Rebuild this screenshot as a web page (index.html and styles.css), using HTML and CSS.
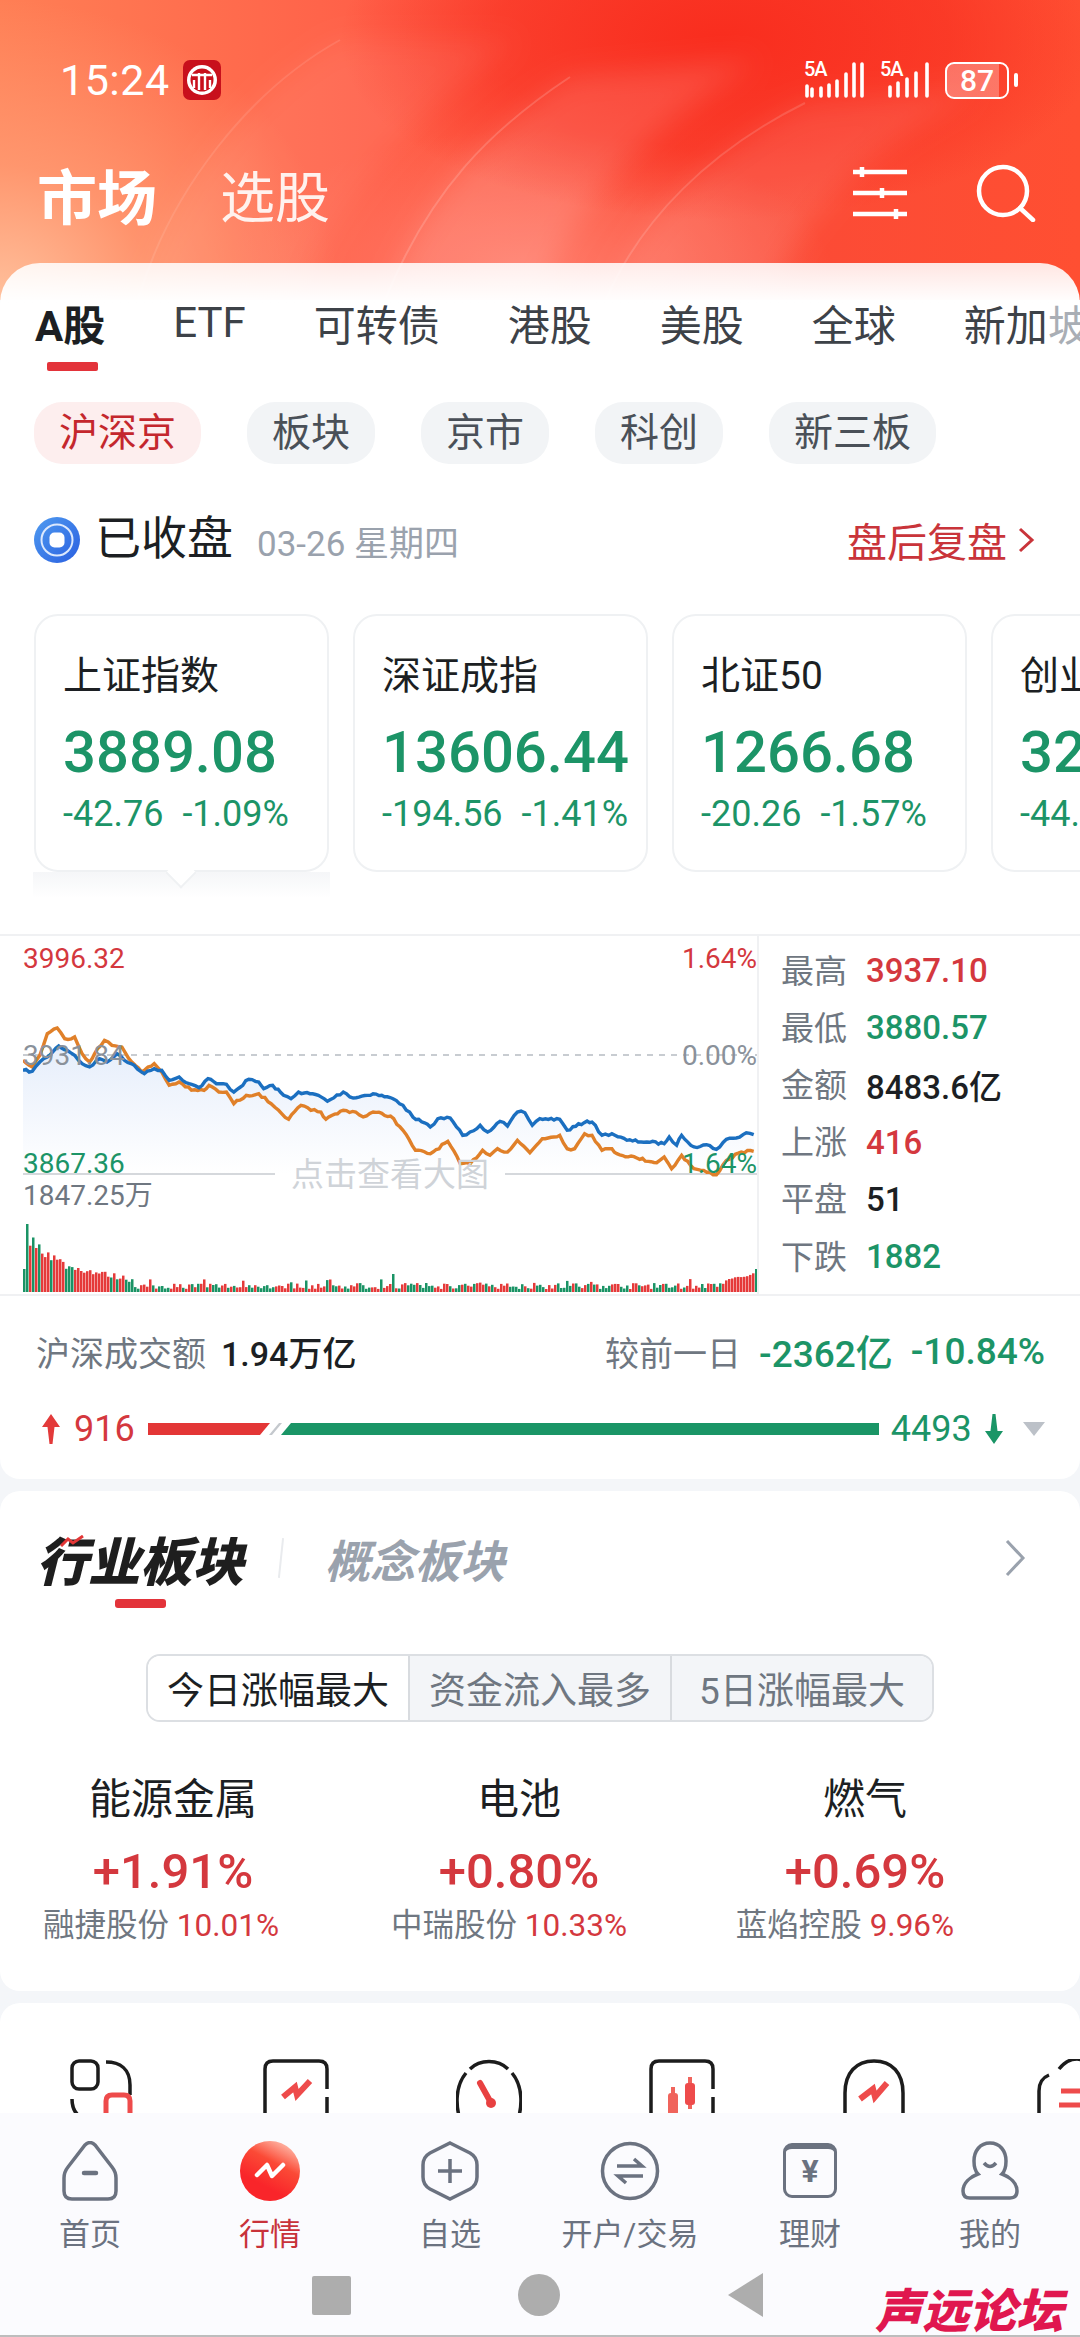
FILE: index.html
```html
<!DOCTYPE html>
<html lang="zh-CN">
<head>
  <meta charset="UTF-8" />
  <meta name="viewport" content="width=device-width, initial-scale=1.0"/>
  <title>市场</title>
  <link rel="stylesheet" href="styles.css">
</head>
<body>

  <div class="phone">

    <div class="hero">
      <svg class="hero-arcs" width="1080" height="300" viewBox="0 0 1080 300">
        <defs>
          <filter id="arcBlur"><feGaussianBlur stdDeviation="14"/></filter>
        </defs>
        <g filter="url(#arcBlur)">
          <path d="M138 300 C170 190 250 90 340 40 L520 40 C400 120 330 210 300 300 Z" fill="#fff" opacity="0.07"/>
          <path d="M385 300 C430 190 490 130 570 77 L760 60 C640 130 560 220 540 300 Z" fill="#fff" opacity="0.12"/>
          <path d="M606 300 C640 220 710 150 805 103 L980 90 C860 150 790 230 770 300 Z" fill="#fff" opacity="0.1"/>
        </g>
        <path d="M138 300 C170 190 250 90 340 40" fill="none" stroke="#fff" stroke-opacity="0.1" stroke-width="2"/>
        <path d="M385 300 C430 190 490 130 570 77" fill="none" stroke="#fff" stroke-opacity="0.16" stroke-width="2"/>
        <path d="M606 300 C640 220 710 150 805 103" fill="none" stroke="#fff" stroke-opacity="0.14" stroke-width="2"/>
      </svg>

      <div class="statusbar">
        <span class="clock">15:24</span>
        <svg class="citic" width="38" height="40" viewBox="0 0 38 40">
          <rect width="38" height="40" rx="7" fill="#c8101c"/>
          <circle cx="19" cy="20" r="15" fill="#fff"/>
          <circle cx="19" cy="20" r="11.5" fill="#c8101c"/>
          <path d="M9 15H29M11 20V28M16 13V30M22 13V30M27 20V28" stroke="#fff" stroke-width="2.4" fill="none"/>
        </svg>
        <div class="status-right">
          <div class="signal">
            <span class="signal-tag">5A</span>
            <svg width="62" height="36" viewBox="0 0 62 36">
              <path d="M3 24V34M8 27V34M17 26V34M25 23V34M33 19V34M42 12V34M50 2V34M58 2V34" stroke="#fff" stroke-width="3.6" stroke-linecap="round" fill="none"/>
            </svg>
          </div>
          <div class="signal">
            <span class="signal-tag">5A</span>
            <svg width="51" height="36" viewBox="0 0 51 36">
              <path d="M10 25V34M18 21V34M27 17V34M36 11V34M47 2V34" stroke="#fff" stroke-width="3.6" stroke-linecap="round" fill="none"/>
            </svg>
          </div>
          <div class="battery"><span>87</span></div>
          <div class="battery-tip"></div>
        </div>
      </div>

      <div class="titlebar">
        <span class="title-on">市场</span>
        <span class="title-off">选股</span>
        <div class="title-icons">
          <svg width="56" height="54" viewBox="0 0 56 54">
            <path d="M1 6H55M1 27H55M1 48H55M10 1V11M30 22V32M44 43V53" stroke="#fff" stroke-width="4.5" fill="none"/>
          </svg>
          <svg width="60" height="58" viewBox="0 0 60 58">
            <circle cx="27" cy="27" r="24" stroke="#fff" stroke-width="4.5" fill="none"/>
            <path d="M44 44L57 56" stroke="#fff" stroke-width="4.5" stroke-linecap="round" fill="none"/>
          </svg>
        </div>
      </div>
    </div>

    <div class="content">

      <div class="market card-top">
        <div class="tabs">
          <span class="tab tab-on">A股</span>
          <span class="tab">ETF</span>
          <span class="tab">可转债</span>
          <span class="tab">港股</span>
          <span class="tab">美股</span>
          <span class="tab">全球</span>
          <span class="tab">新加<span class="tab-fade">坡</span></span>
        </div>
        <div class="tab-mark"></div>

        <div class="chips">
          <span class="chip chip-on">沪深京</span>
          <span class="chip">板块</span>
          <span class="chip">京市</span>
          <span class="chip">科创</span>
          <span class="chip">新三板</span>
        </div>

        <div class="closed-row">
          <svg class="closed-icon" width="46" height="46" viewBox="0 0 46 46">
            <defs>
              <linearGradient id="closedBlue" x1="0" y1="0" x2="1" y2="1">
                <stop offset="0" stop-color="#4f9bf0"/>
                <stop offset="1" stop-color="#2a5fe0"/>
              </linearGradient>
            </defs>
            <circle cx="23" cy="23" r="23" fill="url(#closedBlue)"/>
            <circle cx="23" cy="23" r="15.5" fill="none" stroke="#dbe8fd" stroke-width="2"/>
            <rect x="15.5" y="15.5" width="15" height="15" rx="5" fill="#fff"/>
          </svg>
          <span class="closed-text">已收盘</span>
          <span class="closed-date">03-26 星期四</span>
          <span class="closed-link">盘后复盘
            <svg width="18" height="28" viewBox="0 0 18 28"><path d="M3 3L15 14L3 25" stroke="#c9343a" stroke-width="3" fill="none"/></svg>
          </span>
        </div>

        <div class="index-cards">
          <div class="index-card index-card-on">
            <div class="index-name">上证指数</div>
            <div class="index-value">3889.08</div>
            <div class="index-delta"><span>-42.76</span><span>-1.09%</span></div>
          </div>
          <div class="index-card">
            <div class="index-name">深证成指</div>
            <div class="index-value">13606.44</div>
            <div class="index-delta"><span>-194.56</span><span>-1.41%</span></div>
          </div>
          <div class="index-card">
            <div class="index-name">北证50</div>
            <div class="index-value">1266.68</div>
            <div class="index-delta"><span>-20.26</span><span>-1.57%</span></div>
          </div>
          <div class="index-card">
            <div class="index-name">创业板指</div>
            <div class="index-value">3295.44</div>
            <div class="index-delta"><span>-44.30</span><span>-1.33%</span></div>
          </div>
        </div>

        <div class="chart-panel">
          <div class="chart-box">
            <svg id="chart" width="734" height="358" viewBox="0 0 734 358"></svg>
            <span class="axis axis-l axis-top red">3996.32</span>
            <span class="axis axis-r axis-top red">1.64%</span>
            <span class="axis axis-l axis-mid gray">3931.84</span>
            <span class="axis axis-r axis-mid gray">0.00%</span>
            <span class="axis axis-l axis-low green">3867.36</span>
            <span class="axis axis-r axis-low green">1.64%</span>
            <span class="axis axis-l axis-vol gray">1847.25万</span>
            <span class="chart-hint">点击查看大图</span>
          </div>
          <div class="stats">
            <div class="stat"><span class="stat-label">最高</span><span class="red">3937.10</span></div>
            <div class="stat"><span class="stat-label">最低</span><span class="green">3880.57</span></div>
            <div class="stat"><span class="stat-label">金额</span><span>8483.6亿</span></div>
            <div class="stat"><span class="stat-label">上涨</span><span class="red">416</span></div>
            <div class="stat"><span class="stat-label">平盘</span><span>51</span></div>
            <div class="stat"><span class="stat-label">下跌</span><span class="green">1882</span></div>
          </div>
        </div>

        <div class="turnover">
          <span class="turnover-label">沪深成交额</span>
          <span class="turnover-value">1.94万亿</span>
          <span class="turnover-label turnover-push">较前一日</span>
          <span class="turnover-diff green">-2362亿</span>
          <span class="turnover-diff green">-10.84%</span>
        </div>

        <div class="breadth">
          <svg width="18" height="30" viewBox="0 0 18 30"><path d="M9 0L18 13H12.5L10.5 30H7.5L5.5 13H0Z" fill="#e33a3a"/></svg>
          <span class="breadth-num red">916</span>
          <svg class="breadth-bar" width="731" height="12" viewBox="0 0 731 12">
            <polygon points="0,0 122,0 112,12 0,12" fill="#e33636"/>
            <polygon points="121,12 131,0 134,0 124,12" fill="#c4c8cd"/>
            <polygon points="133,12 143,0 731,0 731,12" fill="#1a9566"/>
          </svg>
          <span class="breadth-num green">4493</span>
          <svg width="18" height="30" viewBox="0 0 18 30"><path d="M9 30L18 17H12.5L10.5 0H7.5L5.5 17H0Z" fill="#1a9566"/></svg>
          <svg class="breadth-more" width="22" height="14" viewBox="0 0 22 14"><path d="M0 0H22L11 14Z" fill="#bcc1c8"/></svg>
        </div>
      </div>

      <div class="sector card">
        <div class="sector-head">
          <span class="sector-on">
            <svg class="sector-zig" width="24" height="12" viewBox="0 0 24 12"><path d="M1 11L8 4L13 8L23 1" stroke="#e33636" stroke-width="3" fill="none"/></svg>
            行业板块
          </span>
          <span class="sector-slash"></span>
          <span class="sector-off">概念板块</span>
          <svg class="sector-more" width="22" height="38" viewBox="0 0 22 38"><path d="M3 2L19 19L3 36" stroke="#9aa2ad" stroke-width="3" fill="none"/></svg>
        </div>
        <div class="sector-mark"></div>

        <div class="segment">
          <span class="seg seg-on">今日涨幅最大</span>
          <span class="seg">资金流入最多</span>
          <span class="seg">5日涨幅最大</span>
        </div>

        <div class="sector-cols">
          <div class="sector-col">
            <div class="sector-name">能源金属</div>
            <div class="sector-value red">+1.91%</div>
            <div class="sector-sub">融捷股份 <span class="red">10.01%</span></div>
          </div>
          <div class="sector-col">
            <div class="sector-name">电池</div>
            <div class="sector-value red">+0.80%</div>
            <div class="sector-sub">中瑞股份 <span class="red">10.33%</span></div>
          </div>
          <div class="sector-col">
            <div class="sector-name">燃气</div>
            <div class="sector-value red">+0.69%</div>
            <div class="sector-sub">蓝焰控股 <span class="red">9.96%</span></div>
          </div>
        </div>
      </div>

      <div class="tools card">
        <svg width="66" height="66" viewBox="0 0 66 66">
          <rect x="2" y="2" width="26" height="28" rx="7" fill="none" stroke="#1c1c1c" stroke-width="3.5"/>
          <path d="M36 3C50 3 60 10 60 26V36M2 40C2 52 8 60 22 62" fill="none" stroke="#1c1c1c" stroke-width="3.5"/>
          <path d="M36 66V42Q36 36 42 36H54Q60 36 60 42V66" fill="none" stroke="#ee4b4b" stroke-width="5"/>
        </svg>
        <svg width="66" height="66" viewBox="0 0 66 66">
          <path d="M2 60V10Q2 2 10 2H56Q64 2 64 10V30M64 38V60" fill="none" stroke="#1c1c1c" stroke-width="3.5"/>
          <path d="M20 38L32 28L34 36L47 22" fill="none" stroke="#ee4b4b" stroke-width="6"/>
        </svg>
        <svg width="66" height="66" viewBox="0 0 66 66">
          <path d="M6 66C-2 46 0 26 10 14M14 10C24 0 42 0 52 10M56 14C66 26 68 46 60 66" fill="none" stroke="#1c1c1c" stroke-width="3.5"/>
          <path d="M24 24L34 42" stroke="#e84141" stroke-width="6" stroke-linecap="round"/>
          <circle cx="35" cy="44" r="5" fill="#e84141"/>
        </svg>
        <svg width="66" height="66" viewBox="0 0 66 66">
          <path d="M2 66V10Q2 2 10 2H56Q64 2 64 10V30M64 38V66" fill="none" stroke="#1c1c1c" stroke-width="3.5"/>
          <path d="M24 28V62M41 18V50" stroke="#f0645c" stroke-width="4"/>
          <rect x="19" y="34" width="10" height="22" rx="3" fill="#f0645c"/>
          <rect x="36" y="24" width="10" height="22" rx="3" fill="#ee4b4b"/>
        </svg>
        <svg width="66" height="66" viewBox="0 0 66 66">
          <path d="M3 54V34C3 14 14 2 32 2C50 2 61 14 61 34V54" fill="none" stroke="#1c1c1c" stroke-width="3.5"/>
          <path d="M18 40L31 30L33 38L45 24" fill="none" stroke="#ee4b4b" stroke-width="6"/>
        </svg>
        <svg width="66" height="66" viewBox="0 0 66 66">
          <path d="M4 66V32Q4 20 14 16M24 10Q32 0 42 0Q50 0 56 10" fill="none" stroke="#1c1c1c" stroke-width="3.5"/>
          <path d="M26 32H58M24 46H56" stroke="#ee4b4b" stroke-width="5"/>
        </svg>
      </div>

    </div>

    <div class="nav">
      <div class="nav-items">
        <div class="nav-item">
          <svg width="60" height="60" viewBox="0 0 60 60">
            <path d="M25 4Q30 -1 35 4L52 26Q56 31 56 37V50Q56 58 48 58H12Q4 58 4 50V37Q4 31 8 26Z" fill="none" stroke="#6b7280" stroke-width="3.5"/>
            <path d="M24 32H36" stroke="#6b7280" stroke-width="4.5" stroke-linecap="round"/>
          </svg>
          <span>首页</span>
        </div>
        <div class="nav-item nav-item-on">
          <svg width="62" height="60" viewBox="0 0 62 60">
            <defs>
              <linearGradient id="navRed" x1="0.8" y1="0" x2="0.4" y2="0.75">
                <stop offset="0" stop-color="#ffc4b4"/>
                <stop offset="0.5" stop-color="#fb4a36"/>
                <stop offset="1" stop-color="#f9252a"/>
              </linearGradient>
            </defs>
            <circle cx="31" cy="30" r="30" fill="url(#navRed)"/>
            <path d="M18 34L28 24L33 35L44 24" fill="none" stroke="#fff" stroke-width="4.5" stroke-linecap="round" stroke-linejoin="round"/>
          </svg>
          <span>行情</span>
        </div>
        <div class="nav-item">
          <svg width="60" height="60" viewBox="0 0 60 60">
            <path d="M30 2L50 12Q57 16 57 24V36Q57 44 50 48L30 58L10 48Q3 44 3 36V24Q3 16 10 12Z" fill="none" stroke="#6b7280" stroke-width="3.5"/>
            <path d="M18 30H42M30 18V42" stroke="#6b7280" stroke-width="3.5"/>
          </svg>
          <span>自选</span>
        </div>
        <div class="nav-item">
          <svg width="60" height="60" viewBox="0 0 60 60">
            <circle cx="30" cy="30" r="27.5" fill="none" stroke="#6b7280" stroke-width="3.5"/>
            <path d="M17 25H42L34 18M43 35H18L26 42" fill="none" stroke="#6b7280" stroke-width="3.5"/>
          </svg>
          <span>开户/交易</span>
        </div>
        <div class="nav-item">
          <div class="nav-yuan">¥</div>
          <span>理财</span>
        </div>
        <div class="nav-item">
          <svg width="60" height="60" viewBox="0 0 60 60">
            <path d="M30 2C40 2 46 10 46 20C46 27 44 31 42 33C50 36 57 42 57 50Q57 57 50 57H10Q3 57 3 50C3 42 10 36 18 33C16 31 14 27 14 20C14 10 20 2 30 2Z" fill="none" stroke="#6b7280" stroke-width="3.5"/>
            <path d="M24 22Q30 29 36 22" fill="none" stroke="#6b7280" stroke-width="3.5"/>
          </svg>
          <span>我的</span>
        </div>
      </div>
      <div class="softkeys">
        <div class="key-square"></div>
        <div class="key-circle"></div>
        <div class="key-back"></div>
      </div>
      <span class="watermark">声远论坛</span>
    </div>

  </div>

  <script src="chart.js"></script>
</body>
</html>
```

FILE: styles.css
```css
body {
  margin: 0;
  font-family: Roboto, "Noto Sans CJK SC", sans-serif;
  color: #1c1f23;
}

.phone {
  width: 1080px;
  height: 2337px;
  display: flex;
  flex-direction: column;
  overflow: hidden;
  background: #f4f6f9;
}

.red { color: #d4383e; }
.green { color: #1c9467; }
.gray { color: #7a828c; }

/* top red area */
.hero {
  position: relative;
  height: 300px;
  flex: none;
  color: #fff;
  background:
    radial-gradient(ellipse 340px 300px at 0 300px, #ffc09c 0%, rgba(255, 160, 120, 0.7) 45%, rgba(255, 120, 80, 0) 100%),
    radial-gradient(ellipse 380px 180px at 720px 40px, #f92d1e 0%, rgba(249, 45, 30, 0.6) 60%, rgba(249, 45, 30, 0) 100%),
    radial-gradient(ellipse 300px 140px at 530px 270px, #ff7a68 0%, rgba(255, 122, 104, 0) 100%),
    linear-gradient(90deg, #ff7f55 0%, #ff5f48 35%, #fb4a36 70%, #ff4f32 100%);
}

.hero-arcs {
  position: absolute;
  left: 0;
  top: 0;
}

.statusbar {
  position: relative;
  height: 40px;
  padding: 60px 62px 0 60px;
  display: flex;
  align-items: center;
}

.clock {
  font-size: 43px;
  letter-spacing: 0.5px;
}

.citic {
  margin-left: 13px;
}

.status-right {
  margin-left: auto;
  display: flex;
  align-items: center;
  gap: 14px;
}

.signal {
  position: relative;
  display: flex;
  align-items: flex-end;
}

.signal-tag {
  position: absolute;
  left: 0;
  top: -5px;
  font-size: 20px;
  font-weight: 500;
  letter-spacing: -1px;
}

.battery {
  width: 64px;
  height: 37px;
  box-sizing: border-box;
  border: 2.5px solid #fff;
  border-radius: 9px;
  display: flex;
  align-items: center;
  justify-content: center;
  font-size: 30px;
  font-weight: 500;
  background: linear-gradient(90deg, rgba(255, 255, 255, 0.28) 87%, transparent 87%);
}

.battery-tip {
  width: 4px;
  height: 14px;
  margin-left: -9px;
  background: #fff;
  border-radius: 2px;
}

.titlebar {
  position: relative;
  display: flex;
  align-items: center;
  height: 70px;
  margin-top: 58px;
  padding: 0 44px 0 37px;
}

.title-on {
  font-size: 60px;
  font-weight: 700;
}

.title-off {
  font-size: 55px;
  margin-left: 63px;
  color: #fff2ee;
}

.title-icons {
  margin-left: auto;
  display: flex;
  align-items: center;
  gap: 68px;
}

/* white market sheet */
.content {
  flex: 1;
  min-height: 0;
  overflow: hidden;
  margin-top: -37px;
  position: relative;
}

.market {
  background: linear-gradient(180deg, rgba(255, 255, 255, 0.86) 0, #fff 40px);
  border-radius: 40px 40px 20px 20px;
  padding-top: 33px;
  padding-bottom: 30px;
}

.card {
  background: #fff;
  border-radius: 20px;
  margin-top: 12px;
}

.tabs {
  display: flex;
  gap: 68px;
  padding-left: 35px;
  height: 52px;
  align-items: center;
  white-space: nowrap;
}

.tab {
  font-size: 42px;
  color: #3d4248;
}

.tab-on {
  font-weight: 700;
  color: #1c1f23;
}

.tab-fade {
  color: #a9aeb5;
}

.tab-mark {
  width: 51px;
  height: 9px;
  margin: 14px 0 0 47px;
  background: #e3333a;
  border-radius: 2px;
}

.chips {
  display: flex;
  gap: 46px;
  margin-top: 31px;
  padding-left: 34px;
}

.chip {
  height: 62px;
  padding: 0 25px;
  border-radius: 28px;
  background: #f2f4f6;
  color: #4a5058;
  font-size: 39px;
  line-height: 62px;
}

.chip-on {
  background: #fdeeee;
  color: #c4272d;
}

.closed-row {
  display: flex;
  align-items: center;
  height: 60px;
  margin-top: 46px;
  padding: 0 45px 0 34px;
}

.closed-text {
  font-size: 46px;
  margin-left: 15px;
  line-height: 56px;
  margin-bottom: 4px;
}

.closed-date {
  font-size: 35px;
  color: #9aa2ad;
  margin-left: 24px;
}

.closed-link {
  margin-left: auto;
  display: flex;
  align-items: center;
  gap: 10px;
  font-size: 40px;
  color: #c9343a;
}

.index-cards {
  display: flex;
  gap: 24px;
  margin-top: 44px;
  padding: 0 0 62px 34px;
  overflow: hidden;
}

.index-card {
  position: relative;
  flex: none;
  width: 295px;
  height: 258px;
  box-sizing: border-box;
  padding: 35px 0 0 27px;
  border: 2px solid #eff1f3;
  border-radius: 24px;
}

/* pointer and fade under the selected index */
.index-card-on::before {
  content: "";
  position: absolute;
  left: -3px;
  right: -3px;
  top: 256px;
  height: 26px;
  background: linear-gradient(180deg, #f5f6f8, #fff);
}

.index-card-on::after {
  content: "";
  position: absolute;
  left: 134px;
  top: 246px;
  width: 20px;
  height: 20px;
  background: #fff;
  border-right: 2px solid #eff1f3;
  border-bottom: 2px solid #eff1f3;
  transform: rotate(45deg);
}

.index-name {
  font-size: 39px;
  line-height: 50px;
}

.index-value {
  font-size: 58px;
  font-weight: 500;
  line-height: 68px;
  margin-top: 17px;
  color: #1c9467;
}

.index-delta {
  display: flex;
  gap: 19px;
  font-size: 36px;
  line-height: 40px;
  margin-top: 8px;
  color: #1c9467;
  white-space: nowrap;
}

.chart-panel {
  display: flex;
  height: 358px;
  border-top: 2px solid #f0f1f3;
  border-bottom: 2px solid #f0f1f3;
  padding-left: 23px;
}

.chart-box {
  position: relative;
  width: 734px;
  flex: none;
  border-right: 2px solid #f0f1f3;
}

#chart {
  display: block;
}

.axis {
  position: absolute;
  font-size: 28px;
  line-height: 32px;
  white-space: nowrap;
}

.axis-l { left: 0; }
.axis-r { right: 0; }
.axis-top { top: 7px; }
.axis-mid { top: 104px; color: #8a919a; }
.axis-low { top: 212px; }
.axis-vol { top: 244px; color: #6f7781; }

.chart-hint {
  position: absolute;
  left: 252px;
  top: 217px;
  width: 230px;
  text-align: center;
  font-size: 33px;
  line-height: 44px;
  color: #cfd3d8;
}

.stats {
  flex: 1;
  padding: 6px 0 0 22px;
}

.stat {
  display: flex;
  align-items: center;
  gap: 19px;
  height: 57.2px;
  font-size: 33px;
  font-weight: 500;
  white-space: nowrap;
}

.stat-label {
  color: #6f7781;
  font-weight: 400;
  margin-bottom: 4px;
}

.turnover {
  display: flex;
  align-items: center;
  height: 50px;
  margin-top: 30px;
  padding: 0 35px 0 36px;
  font-size: 34px;
  white-space: nowrap;
}

.turnover-label {
  color: #6f7781;
}

.turnover-value {
  font-weight: 500;
  margin-left: 15px;
}

.turnover-push {
  margin-left: auto;
}

.turnover-diff {
  font-size: 37px;
  font-weight: 500;
  margin-left: 18px;
}

.breadth {
  display: flex;
  align-items: center;
  height: 40px;
  margin-top: 33px;
  padding-left: 42px;
  white-space: nowrap;
}

.breadth-num {
  font-size: 36px;
  margin-left: 14px;
}

.breadth-bar {
  margin-left: 13px;
}

.breadth .green {
  margin: 0 13px 0 12px;
}

.breadth-more {
  margin-left: 20px;
}

/* sector card */
.sector {
  height: 500px;
  padding-top: 37px;
  box-sizing: border-box;
}

.sector-head {
  display: flex;
  align-items: center;
  height: 60px;
  padding: 0 54px 0 36px;
}

.sector-on {
  position: relative;
  font-size: 52px;
  font-weight: 900;
  font-style: italic;
  color: #1e1e1e;
}

.sector-zig {
  position: absolute;
  left: 24px;
  top: 14px;
}

.sector-slash {
  width: 2px;
  height: 40px;
  margin-left: 36px;
  background: #e9ebee;
  transform: rotate(6deg);
}

.sector-off {
  font-size: 45px;
  font-weight: 700;
  font-style: italic;
  color: #9aa2ad;
  margin-left: 43px;
}

.sector-more {
  margin-left: auto;
}

.sector-mark {
  width: 51px;
  height: 9px;
  margin: 11px 0 0 115px;
  background: #e3333a;
  border-radius: 3px;
}

.segment {
  display: flex;
  width: 788px;
  height: 68px;
  box-sizing: border-box;
  margin: 46px 0 0 146px;
  border: 2px solid #dcdfe3;
  border-radius: 14px;
  overflow: hidden;
}

.seg {
  flex: 1;
  display: flex;
  align-items: center;
  justify-content: center;
  font-size: 37px;
  color: #6f7781;
  background: #f3f5f8;
  border-left: 2px solid #d8dbdf;
  white-space: nowrap;
}

.seg-on {
  color: #1c1f23;
  background: #fff;
  border-left: none;
}

.sector-cols {
  display: grid;
  grid-template-columns: repeat(3, 346px);
  margin-top: 54px;
  text-align: center;
}

.sector-name {
  font-size: 42px;
  line-height: 48px;
}

.sector-value {
  font-size: 49px;
  font-weight: 500;
  line-height: 56px;
  margin-top: 20px;
}

.sector-sub {
  font-size: 31.5px;
  line-height: 40px;
  margin: 6px 0 0 -24px;
  color: #6f7781;
  white-space: nowrap;
}

.sector-col:nth-child(2) .sector-sub {
  margin-left: -20px;
}

.sector-col:nth-child(3) .sector-sub {
  margin-left: -40px;
}

.tools {
  display: flex;
  gap: 127px;
  padding: 56px 0 0 70px;
  height: 100px;
}

.tools svg {
  flex: none;
}

/* bottom navigation */
.nav {
  position: relative;
  height: 224px;
  flex: none;
  box-sizing: border-box;
  padding-top: 28px;
  background: #fbfbfe;
  border-bottom: 2px solid #bdbdbd;
}

.nav-items {
  display: grid;
  grid-template-columns: repeat(6, 180px);
}

.nav-item {
  display: flex;
  flex-direction: column;
  align-items: center;
  font-size: 31px;
  line-height: 38px;
  color: #6b7280;
  white-space: nowrap;
}

.nav-item svg {
  display: block;
  margin-bottom: 15px;
}

.nav-item-on {
  color: #c8323a;
}

.nav-yuan {
  width: 54px;
  height: 55px;
  box-sizing: border-box;
  margin: 2px 0 18px;
  border: 3.5px solid #6b7280;
  border-top-width: 6px;
  border-radius: 9px;
  text-align: center;
  font-size: 32px;
  line-height: 44px;
  font-weight: 700;
}

.softkeys {
  display: flex;
  align-items: center;
  height: 44px;
  margin-top: 19px;
  padding-left: 312px;
}

.key-square {
  width: 39px;
  height: 39px;
  background: #adadad;
  border-radius: 2px;
}

.key-circle {
  width: 42px;
  height: 42px;
  margin-left: 167px;
  background: #adadad;
  border-radius: 50%;
}

.key-back {
  width: 0;
  height: 0;
  margin-left: 168px;
  border-top: 22px solid transparent;
  border-bottom: 22px solid transparent;
  border-right: 35px solid #adadad;
}

.watermark {
  position: absolute;
  left: 875px;
  top: 176px;
  font-size: 47px;
  line-height: 46px;
  font-weight: 900;
  font-style: italic;
  color: #e0174f;
  white-space: nowrap;
}
```

FILE: chart.js
```js
// points read off the intraday chart, in reference pixels of the crop
const blue = [[46,445],[65,448],[80,420],[95,405],[118,372],[135,385],[150,400],[165,425],[180,435],[200,410],[215,420],[235,395],[250,415],[270,430],[290,455],[310,440],[325,445],[340,475],[360,465],[380,485],[400,497],[418,470],[435,485],[455,487],[470,510],[500,472],[520,480],[530,500],[548,490],[570,520],[585,530],[600,510],[640,520],[658,538],[690,510],[710,528],[750,515],[790,530],[810,550],[830,585],[865,615],[880,590],[905,588],[930,640],[945,630],[965,610],[980,630],[1005,598],[1020,612],[1040,570],[1055,572],[1070,610],[1085,590],[1125,592],[1140,625],[1180,597],[1190,600],[1210,640],[1230,635],[1260,655],[1300,660],[1335,665],[1345,645],[1360,670],[1370,640],[1395,675],[1420,668],[1440,682],[1460,652],[1480,648],[1500,632],[1515,638]];
const orange = [[46,415],[65,435],[80,400],[95,335],[115,318],[130,350],[150,345],[165,395],[180,420],[190,395],[210,355],[225,370],[245,375],[265,420],[285,450],[310,425],[325,450],[340,490],[360,480],[385,505],[410,505],[420,490],[440,510],[455,510],[470,545],[495,520],[520,515],[545,545],[560,565],[580,592],[605,550],[625,565],[645,570],[655,592],[690,565],[715,570],[730,585],[750,570],[785,582],[810,625],[835,685],[865,695],[900,658],[925,725],[945,725],[970,685],[985,700],[1000,680],[1020,690],[1040,655],[1065,692],[1090,650],[1125,640],[1140,680],[1155,680],[1175,635],[1190,640],[1210,685],[1230,680],[1240,695],[1280,708],[1320,722],[1335,705],[1350,740],[1370,700],[1395,740],[1440,758],[1460,715],[1490,690],[1515,688]];

let seed = 7;
function rnd() {
  seed = (seed * 16807) % 2147483647;
  return seed / 2147483647;
}

function toLocal(p) {
  return [p[0] / 2.01 - 23, p[1] / 3 - 14];
}

// walk along the points and add a little noise so the line looks like ticks
function jitter(points) {
  const out = [];
  for (let i = 0; i < points.length - 1; i++) {
    const a = toLocal(points[i]);
    const b = toLocal(points[i + 1]);
    const steps = Math.max(1, Math.round((b[0] - a[0]) / 3));
    for (let s = 0; s < steps; s++) {
      const t = s / steps;
      const n = s === 0 ? 0 : (rnd() - 0.5) * 2.6;
      out.push((a[0] + (b[0] - a[0]) * t).toFixed(1) + ',' + (a[1] + (b[1] - a[1]) * t + n).toFixed(1));
    }
  }
  const last = toLocal(points[points.length - 1]);
  out.push(last[0].toFixed(1) + ',' + last[1].toFixed(1));
  return out;
}

const bluePts = jitter(blue);
const orangePts = jitter(orange);

// volume height by x, from the shape of the reference bars
function volume(x) {
  if (x < 3) return 23;
  if (x < 6) return 68;
  if (x < 40) return 52 - (x - 6) * 0.75 + (rnd() - 0.5) * 12;
  if (x < 110) return 26 - (x - 40) * 0.2 + (rnd() - 0.5) * 6;
  if (x > 730) return 23;
  if (x > 700) return 11 + (x - 700) * 0.2 + rnd() * 2;
  if (x > 368 && x < 372) return 18;
  return 3 + rnd() * 6 + (rnd() > 0.93 ? 5 : 0);
}

let bars = '';
for (let x = 0; x < 734; x += 3) {
  const h = volume(x);
  const up = x < 3 || x > 730 ? false : (x < 20 ? rnd() > 0.4 : (x > 700 ? true : rnd() > 0.5));
  bars += '<rect x="' + x + '" y="' + (356 - h).toFixed(1) + '" width="2.5" height="' + h.toFixed(1) + '" fill="' + (up ? '#e53a3a' : '#1a9365') + '"/>';
}

document.getElementById('chart').innerHTML =
  '<defs><linearGradient id="areaFill" x1="0" y1="0" x2="0" y2="1">' +
  '<stop offset="0" stop-color="#e6eefb"/><stop offset="1" stop-color="#ffffff"/></linearGradient></defs>' +
  '<polygon points="' + bluePts.join(' ') + ' 734,238 0,238" fill="url(#areaFill)"/>' +
  '<path d="M0 119H734" stroke="#c8ccd1" stroke-width="2" stroke-dasharray="6 6"/>' +
  '<path d="M0 238H252M482 238H734" stroke="#d5d8dc" stroke-width="2"/>' +
  '<polyline points="' + orangePts.join(' ') + '" fill="none" stroke="#e08029" stroke-width="3.4"/>' +
  '<polyline points="' + bluePts.join(' ') + '" fill="none" stroke="#1b6fc0" stroke-width="3.4"/>' +
  bars;
```
